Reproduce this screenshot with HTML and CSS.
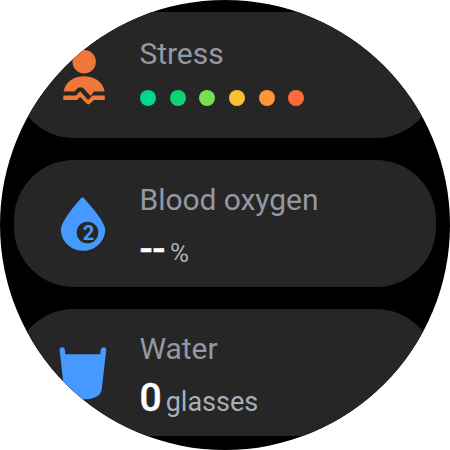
FILE: index.html
```html
<!DOCTYPE html>
<html lang="en">
<head>
    <meta charset="UTF-8">
    <meta name="viewport" content="width=device-width, initial-scale=1.0">
    <title>Health</title>
    <link rel="stylesheet" href="styles.css">
</head>
<body>

    <div class="watch">
        <div class="card stress">
            <svg class="icon" viewBox="0 0 60 66" width="60" height="66">
                <g fill="#ee7739">
                    <circle cx="30.2" cy="17.7" r="11.7"/>
                    <path d="M9.7 47.5 C11 38 20 32.2 30 32.2 S49.5 38 50.6 47.5 H40 L36.5 52 L29.5 44.2 Q26.3 42.2 23.2 44.5 L20.5 47.5 Z"/>
                    <path d="M9.3 51.5 H22 L26.2 47.2 L34 56 L38.5 51.5 H50.8 V56 H40 L35.5 60 Q34 61 32.5 59.6 L26.2 53 L23 56 H9.3 Z"/>
                </g>
            </svg>
            <div class="info">
                <div class="title">Stress</div>
                <div class="levels">
                    <span class="dot level1"></span>
                    <span class="dot level2"></span>
                    <span class="dot level3"></span>
                    <span class="dot level4"></span>
                    <span class="dot level5"></span>
                    <span class="dot level6"></span>
                </div>
            </div>
        </div>

        <div class="card oxygen">
            <svg class="icon" viewBox="0 0 60 66" width="60" height="66">
                <path fill="#4599ff" d="M26.5 5.7 Q28.5 3.3 30.5 5.7 C37 13.5 51.3 28.5 51.3 37.5 A22.3 21.8 0 0 1 6.8 37.5 C6.8 28.5 20 13.5 26.5 5.7 Z"/>
                <circle cx="33.5" cy="39.5" r="10.8" fill="#262626"/>
                <text class="badge" x="34.4" y="46.5" text-anchor="middle">2</text>
            </svg>
            <div class="info">
                <div class="title">Blood oxygen</div>
                <div class="reading"><span class="value">--</span><span class="unit percent">%</span></div>
            </div>
        </div>

        <div class="card water">
            <svg class="icon" viewBox="0 0 60 66" width="60" height="66">
                <path fill="#4599ff" d="M5.6 8.2 Q5.4 5.6 8 5.3 Q10.6 5.2 10.9 8 L11.4 12.3 H46.2 L46.7 8 Q47.1 5.2 49.7 5.3 Q52.4 5.6 52.2 8.2 L47.8 47 Q46.5 57.3 29 57.3 T10 47 Z"/>
            </svg>
            <div class="info">
                <div class="title">Water</div>
                <div class="reading"><span class="value count">0</span><span class="unit">glasses</span></div>
            </div>
        </div>
    </div>

</body>
</html>
```

FILE: styles.css
```css
body {
    font-family: Roboto, "Liberation Sans", sans-serif;
    margin: 0;
    padding: 0;
    background-color: #fff;
}
.watch {
    box-sizing: border-box;
    width: 450px;
    height: 450px;
    padding: 12px 14px 0;
    border-radius: 50%;
    background-color: #000;
    overflow: hidden;
    display: flex;
    flex-direction: column;
    gap: 22px;
}
.card {
    box-sizing: border-box;
    flex: none;
    height: 127px;
    padding: 25px 0 0 40px;
    border-radius: 60px;
    background-color: #262626;
    display: flex;
    gap: 25.5px;
}
.stress {
    height: 126px;
    padding-top: 27px;
    border-radius: 0 0 60px 60px;
}
.icon {
    display: block;
    margin-top: 8px;
}
.stress .icon {
    margin-top: 5px;
}
.badge {
    font-size: 20px;
    font-weight: 700;
    fill: #4599ff;
}
.title {
    font-size: 30px;
    line-height: 30px;
    letter-spacing: -0.05px;
    color: #9498a3;
}
.levels {
    display: flex;
    gap: 13.7px;
    margin-top: 20.5px;
    padding-left: 0.5px;
}
.dot {
    width: 16px;
    height: 16px;
    border-radius: 50%;
}
.level1 {
    background-color: #00d68f;
}
.level2 {
    background-color: #10d070;
}
.level3 {
    background-color: #78df50;
}
.level4 {
    background-color: #f8c030;
}
.level5 {
    background-color: #ff9438;
}
.level6 {
    background-color: #ff6a3a;
}
.reading {
    display: flex;
    align-items: baseline;
    gap: 5px;
    margin-top: 14px;
    line-height: 40px;
}
.value {
    font-size: 39px;
    font-weight: 500;
    letter-spacing: -0.5px;
    color: #fff;
    -webkit-text-stroke: 0.4px #fff;
}
.count {
    letter-spacing: -1px;
}
.unit {
    font-size: 27px;
    color: #a9afb9;
}
.percent {
    font-size: 26px;
}
```
